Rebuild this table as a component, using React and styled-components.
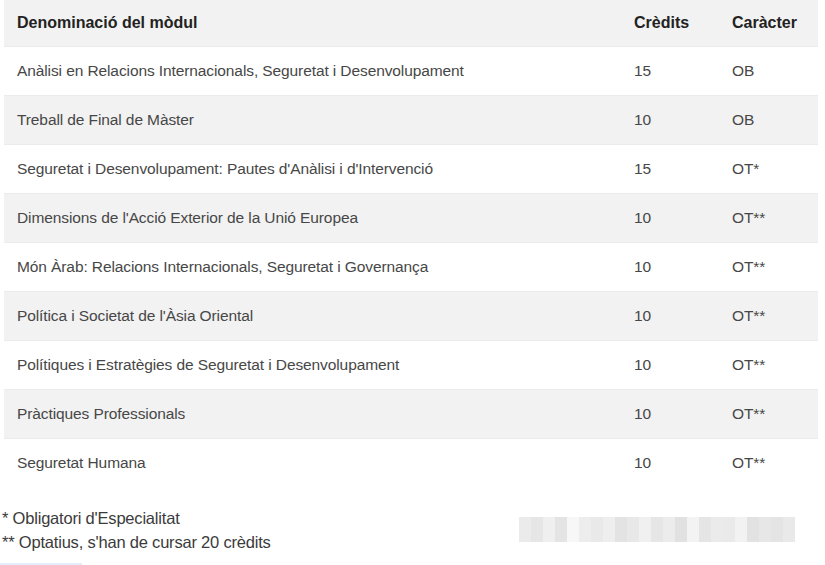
import React from "react";
import styled, { createGlobalStyle } from "styled-components";

const GlobalStyle = createGlobalStyle`
  body {
    margin: 0;
    background: #ffffff;
    font-family: "Liberation Sans", Arial, sans-serif;
    color: #3b3b3b;
  }
`;

const Page = styled.div`
  width: 825px;
  height: 565px;
  overflow: hidden;
  position: relative;
`;

const Table = styled.div`
  margin-left: 4px;
  width: 814px;
`;

const Row = styled.div`
  display: grid;
  grid-template-columns: 617px 98px 1fr;
  align-items: center;
  height: ${(p) => (p.$head ? "46px" : "49px")};
  background: ${(p) => (p.$shade ? "#f2f2f2" : "#ffffff")};
  border-top: ${(p) => (p.$head ? "none" : "1px solid #ebebeb")};
  box-sizing: border-box;
`;

const Cell = styled.div`
  padding-left: 13px;
  font-size: ${(p) => (p.$head ? "16px" : "15.5px")};
  font-weight: ${(p) => (p.$head ? 700 : 400)};
  color: ${(p) => (p.$head ? "#222222" : "#474747")};
  white-space: nowrap;
  letter-spacing: ${(p) => (p.$head ? "0" : "-0.1px")};
`;

const Footer = styled.div`
  display: flex;
  align-items: flex-start;
  padding-top: 19px;
`;

const Notes = styled.div`
  width: 519px;
  padding-left: 2px;
  box-sizing: border-box;
`;

const Note = styled.div`
  font-size: 16.5px;
  line-height: 24px;
  letter-spacing: -0.2px;
  color: #3b3b3b;
  white-space: nowrap;
`;

const Redacted = styled.div`
  display: flex;
  margin-top: 11px;
  width: 276px;
  height: 25px;
`;

const Pixel = styled.div`
  flex: 1;
  background: ${(p) => p.$tone};
`;

const Underline = styled.div`
  position: absolute;
  left: 0;
  bottom: 0;
  width: 82px;
  height: 2px;
  background: #e4eefa;
`;

const modules = [
  ["Anàlisi en Relacions Internacionals, Seguretat i Desenvolupament", "15", "OB"],
  ["Treball de Final de Màster", "10", "OB"],
  ["Seguretat i Desenvolupament: Pautes d'Anàlisi i d'Intervenció", "15", "OT*"],
  ["Dimensions de l'Acció Exterior de la Unió Europea", "10", "OT**"],
  ["Món Àrab: Relacions Internacionals, Seguretat i Governança", "10", "OT**"],
  ["Política i Societat de l'Àsia Oriental", "10", "OT**"],
  ["Polítiques i Estratègies de Seguretat i Desenvolupament", "10", "OT**"],
  ["Pràctiques Professionals", "10", "OT**"],
  ["Seguretat Humana", "10", "OT**"],
];

const tones = [
  "#ebebeb", "#e6e6e6", "#efefef", "#e4e4e4", "#f7f7f7", "#ededed",
  "#e9e9e9", "#eeeeee", "#e3e3e3", "#e8e8e8", "#f0f0f0", "#e6e6e6",
  "#ececec", "#e1e1e1", "#f3f3f3", "#e5e5e5", "#ebebeb", "#eaeaea",
  "#f2f2f2", "#e2e2e2", "#e7e7e7", "#e4e4e4", "#e9e9e9",
];

export default function App() {
  return (
    <Page>
      <GlobalStyle />
      <Table>
        <Row $head $shade>
          <Cell $head>Denominació del mòdul</Cell>
          <Cell $head>Crèdits</Cell>
          <Cell $head>Caràcter</Cell>
        </Row>
        {modules.map((m, i) => (
          <Row key={i} $shade={i % 2 === 1}>
            <Cell>{m[0]}</Cell>
            <Cell>{m[1]}</Cell>
            <Cell>{m[2]}</Cell>
          </Row>
        ))}
      </Table>
      <Footer>
        <Notes>
          <Note>* Obligatori d'Especialitat</Note>
          <Note>** Optatius, s'han de cursar 20 crèdits</Note>
        </Notes>
        <Redacted>
          {tones.map((t, i) => (
            <Pixel key={i} $tone={t} />
          ))}
        </Redacted>
      </Footer>
      <Underline />
    </Page>
  );
}
